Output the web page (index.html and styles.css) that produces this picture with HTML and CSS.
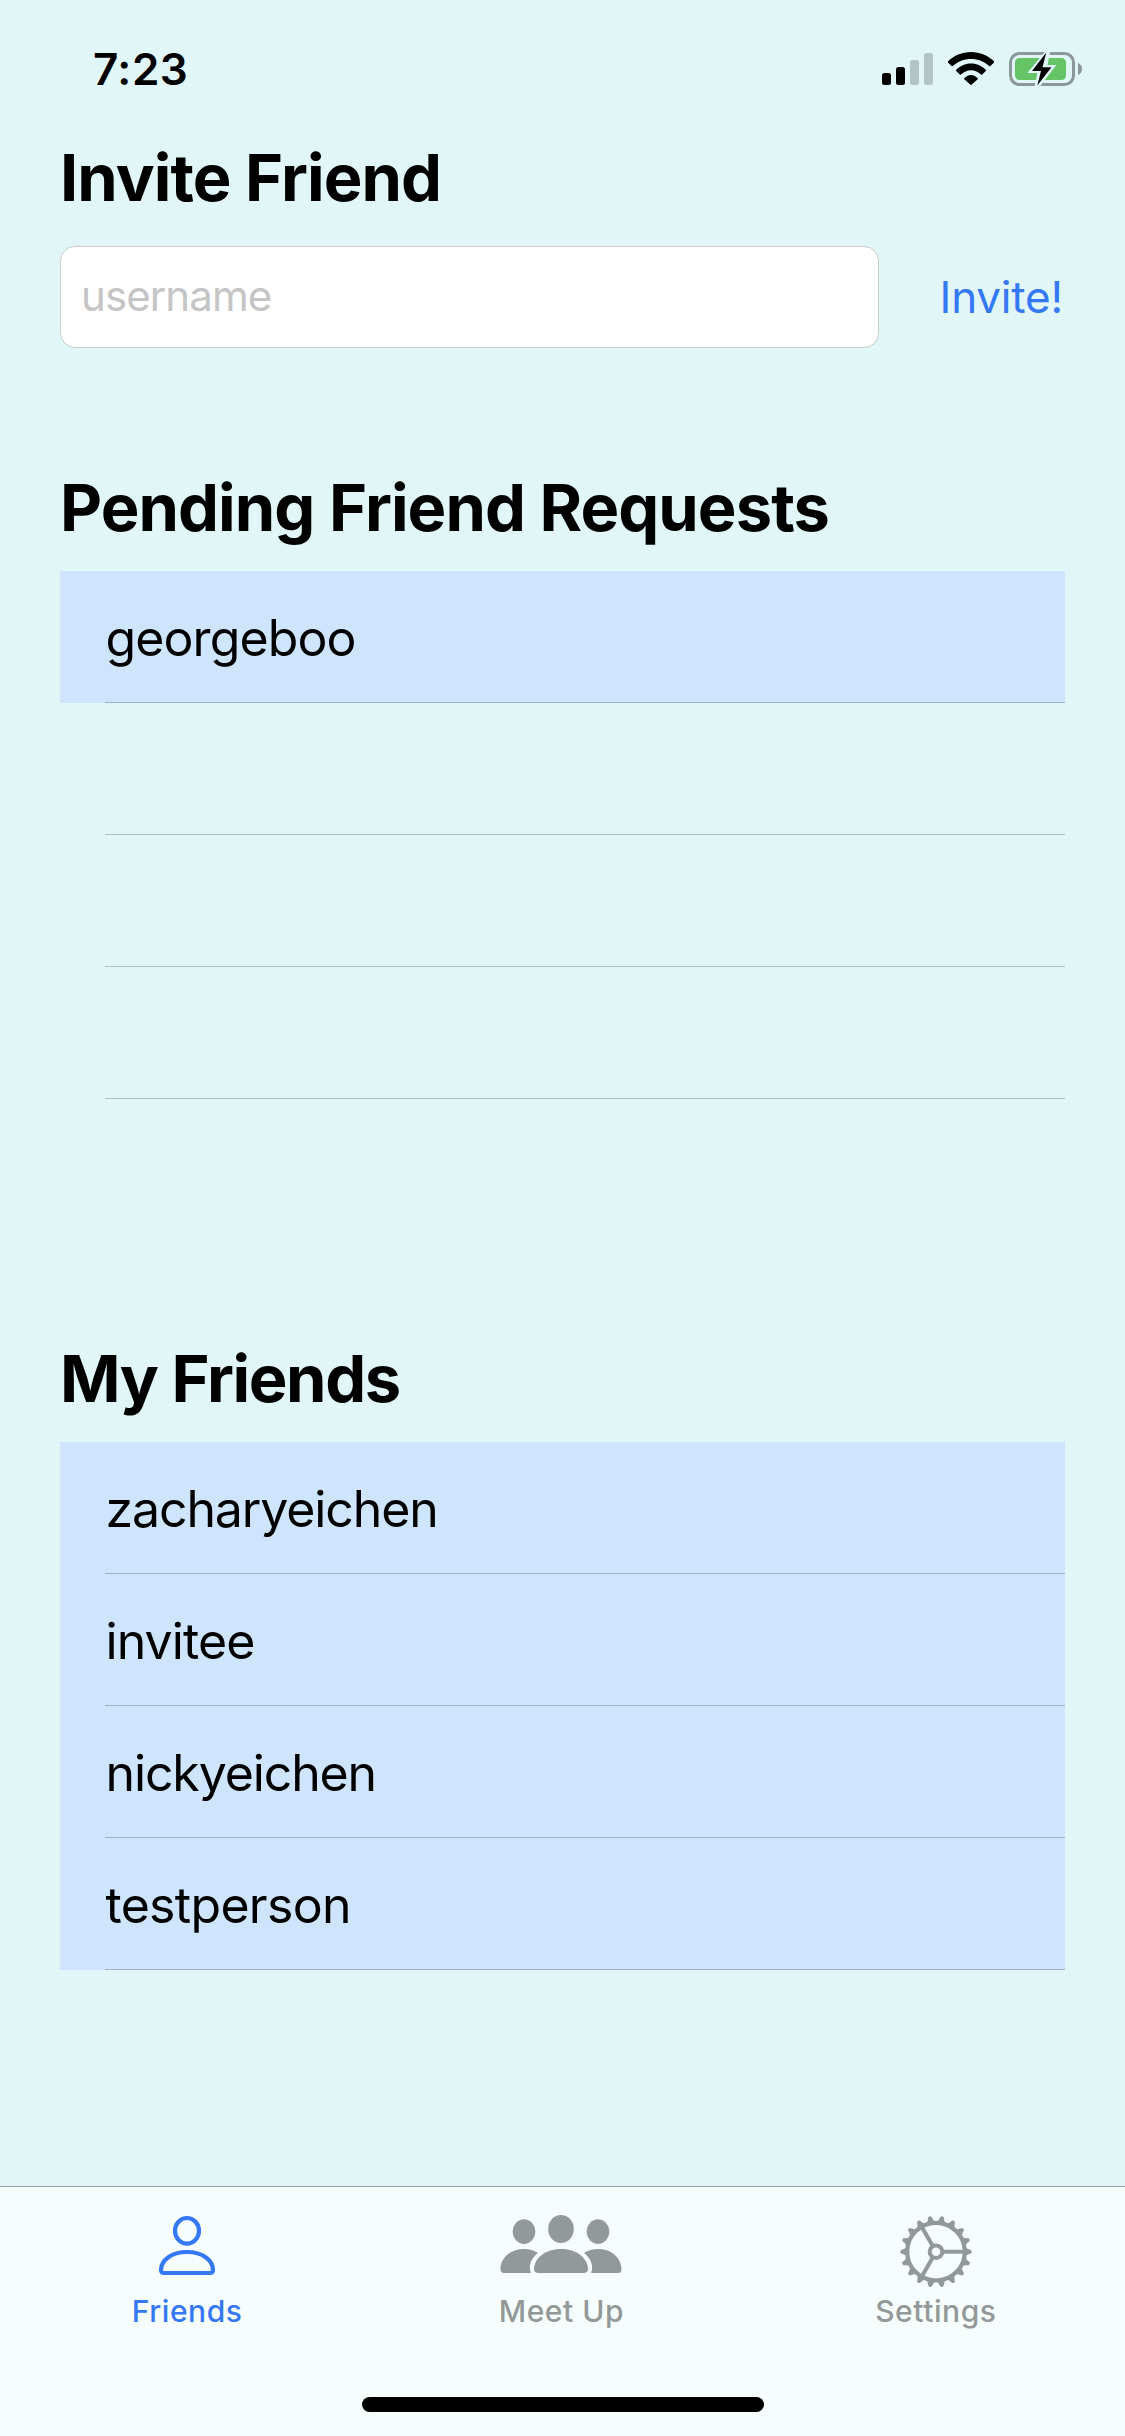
FILE: index.html
```html
<!DOCTYPE html>
<html lang="en">
<head>
<meta charset="utf-8">
<title>Friends</title>
<link rel="stylesheet" href="styles.css">
</head>
<body>
<div class="screen">
  <header class="status">
    <span class="time">7:23</span>
    <div class="status-icons">
      <svg class="signal" width="52" height="33" viewBox="0 0 52 33">
        <rect x="0" y="20" width="9" height="12" rx="2.5"/>
        <rect x="14" y="14" width="9" height="18" rx="2.5"/>
        <g fill="#b2c4c5"><rect x="28" y="7" width="9" height="25" rx="2.5"/><rect x="42" y="0" width="9" height="32" rx="2.5"/></g>
      </svg>
      <svg class="wifi" width="46" height="33" viewBox="0 0 46 33">
        <path d="M0 9.3C6 3.5 14 0 23 0s17 3.5 23 9.3q.5.6 0 1.1l-3.6 3.6q-.6.5-1.2 0C36 9.400 30 7 23 7S10 9.400 4.800 14q-.6.5-1.200 0L0 10.400q-.5-.5 0-1.100z"/>
        <path d="M8.200 17.800C12 14 17 11.400 23 11.400s11 2.600 14.800 6.400q.5.6 0 1.100l-3.600 3.600q-.6.5-1.200 0C30 19.900 27 18.300 23 18.300s-7 1.600-10 4.200q-.6.5-1.200 0L8.200 18.900q-.5-.5 0-1.100z"/>
        <path d="M16.300 26.200C18 24.300 20.300 23 23 23s5 1.300 6.700 3.200q.5.600 0 1.100l-5.900 5.300q-.8.700-1.600 0l-5.900-5.300q-.5-.5 0-1.100z"/>
      </svg>
      <svg class="battery" width="74" height="36" viewBox="0 0 74 36">
        <rect x="1.500" y="2.500" width="63" height="31" rx="9" fill="none" stroke="#8b9798" stroke-width="3"/>
        <rect x="6" y="7" width="51" height="22" rx="4.500" fill="#65c466"/>
        <path d="M69 12q4 1.800 4 6t-4 6z" fill="#8b9798"/>
        <path d="M36.500 0L18.300 22H28.400L25.500 36h5L47.300 14H38.500L41.300 0z" fill="#e0f6f7"/>
        <path d="M37.300 1.500L23 20h9L28.300 34.500L42.500 16.300H33.500z" fill="#000"/>
      </svg>
    </div>
  </header>

  <main class="content">
    <section class="invite">
      <h1>Invite Friend</h1>
      <form class="invite-row">
        <input class="field" type="text" placeholder="username">
        <button class="invite-button" type="button">Invite!</button>
      </form>
    </section>
    <section class="pending">
      <h1>Pending Friend Requests</h1>
      <ul class="list">
        <li class="row filled"><span>georgeboo</span></li>
        <li class="row"><span></span></li>
        <li class="row"><span></span></li>
        <li class="row"><span></span></li>
      </ul>
    </section>
    <section class="friends">
      <h1>My Friends</h1>
      <ul class="list">
        <li class="row filled tight"><span>zacharyeichen</span></li>
        <li class="row filled"><span>invitee</span></li>
        <li class="row filled tight"><span>nickyeichen</span></li>
        <li class="row filled loose"><span>testperson</span></li>
      </ul>
    </section>
  </main>

  <footer class="tabbar">
    <nav class="tabs">
      <a class="tab active">
        <svg width="80" height="80" viewBox="0 0 80 80" fill="none" stroke="currentColor" stroke-width="4.200">
          <ellipse cx="40" cy="19.800" rx="12" ry="12.800"/>
          <path d="M17 62q-3 0-3-3C14 49.500 24 41 40 41S66 49.500 66 59q0 3-3 3z"/>
        </svg>
        <span>Friends</span>
      </a>
      <a class="tab">
        <svg width="124" height="80" viewBox="0 0 124 80" fill="currentColor">
          <ellipse cx="62" cy="18" rx="12.800" ry="14"/>
          <ellipse cx="25" cy="20.600" rx="11.300" ry="12.300"/>
          <ellipse cx="99" cy="20.600" rx="11.300" ry="12.300"/>
          <path d="M39.500 62H84.500Q89 62 89 58C89 48.500 79 38 62 38S35 48.500 35 58Q35 62 39.500 62z"/>
          <path d="M32 62H5Q1.500 62 1.500 58C1.500 48.500 10 38 25 38q8 0 14 4C33 46.500 28.500 54.500 32 62z"/>
          <path d="M92 62H119Q122.500 62 122.500 58C122.500 48.500 114 38 99 38q-8 0-14 4C91 46.500 95.500 54.500 92 62z"/>
        </svg>
        <span>Meet Up</span>
      </a>
      <a class="tab">
        <svg width="80" height="80" viewBox="-40 -40.700 80 80" fill="none" stroke="currentColor">
          <circle r="28.800" stroke-width="4.200"/>
          <circle r="6.300" stroke-width="4"/>
          <path stroke-width="4" d="M7.500 0H28M-3.700-6.500L-14-24.500M-3.700 6.500L-14 24.500"/>
          <g fill="currentColor" stroke="none">
            <g id="teeth">
              <path id="tooth" d="M29.500-4L35.200-1.500Q36.600 0 35.200 1.500L29.500 4z"/>
              <use href="#tooth" transform="rotate(20)"/>
              <use href="#tooth" transform="rotate(40)"/>
              <use href="#tooth" transform="rotate(60)"/>
              <use href="#tooth" transform="rotate(80)"/>
              <use href="#tooth" transform="rotate(100)"/>
            </g>
            <use href="#teeth" transform="rotate(120)"/>
            <use href="#teeth" transform="rotate(240)"/>
          </g>
        </svg>
        <span>Settings</span>
      </a>
    </nav>
    <div class="home-indicator"></div>
  </footer>
</div>
</body>
</html>
```
FILE: styles.css
```css
* { box-sizing: border-box; }

body {
  margin: 0;
  background: #e0f6f7;
  color: #000;
  font-family: Inter, "Liberation Sans", sans-serif;
}

.screen {
  width: 1125px;
  height: 2436px;
  display: flex;
  flex-direction: column;
}

.status {
  height: 138px;
  padding: 42px 42px 0 93px;
  display: flex;
  justify-content: space-between;
  align-items: flex-start;
}

.time {
  font-size: 44px;
  line-height: 54px;
  font-weight: 600;
  letter-spacing: 0.5px;
}

.status-icons { display: flex; padding-top: 9px; }
.signal { margin: 2px 14px 0 0; }
.wifi { margin: 1px 15px 0 0; }

.content {
  flex: 1;
  padding: 0 60px;
}

h1 {
  margin: 0;
  height: 80px;
  font-size: 65px;
  line-height: 80px;
  font-weight: 700;
  letter-spacing: -0.92px;
  white-space: nowrap;
}

.friends h1 { letter-spacing: -1.4px; }

.invite { height: 330px; }

.invite-row {
  margin-top: 28px;
  display: flex;
  justify-content: space-between;
}

.field {
  width: 819px;
  height: 102px;
  padding: 0 20px 4px;
  border: 1px solid #cccccc;
  border-radius: 15px;
  background: #fff;
  font: 400 42px Inter, sans-serif;
  letter-spacing: -0.9px;
}

.field::placeholder { color: #c5c5c5; opacity: 1; }

.invite-button {
  padding: 0 2px 0 0;
  border: 0;
  background: none;
  color: #3478f6;
  font: 400 44px Inter, sans-serif;
  letter-spacing: -0.2px;
}

.pending { height: 871px; }

.list {
  margin: 23px 0 0;
  padding: 0;
  list-style: none;
}

.row {
  height: 132px;
  padding-left: 45px;
}

.row.filled { background: #cee5fd; }

.row span {
  display: block;
  height: 132px;
  border-bottom: 1px solid #adbfc1;
  font-size: 50px;
  line-height: 134px;
  letter-spacing: -0.9px;
  text-indent: 0.5px;
}

.row.filled span { border-color: #a0b2c6; }
.row.tight span { letter-spacing: -1.12px; }
.row.loose span { letter-spacing: -0.7px; }

.tabbar {
  height: 250px;
  border-top: 1px solid #97a6a7;
  background: #f6fdfd;
  display: flex;
  flex-direction: column;
  align-items: center;
  justify-content: space-between;
  padding-bottom: 24px;
}

.tabs {
  display: flex;
  width: 100%;
  padding-right: 2px;
}

.tab {
  flex: 1;
  padding-top: 24px;
  display: flex;
  flex-direction: column;
  align-items: center;
  color: #929998;
}

.tab.active { color: #3478f6; }

.tab span {
  margin-top: 2px;
  font-size: 30px;
  line-height: 36px;
  font-weight: 500;
  letter-spacing: 0.55px;
}

.home-indicator {
  width: 402px;
  height: 15px;
  border-radius: 8px;
  background: #000;
}
```
